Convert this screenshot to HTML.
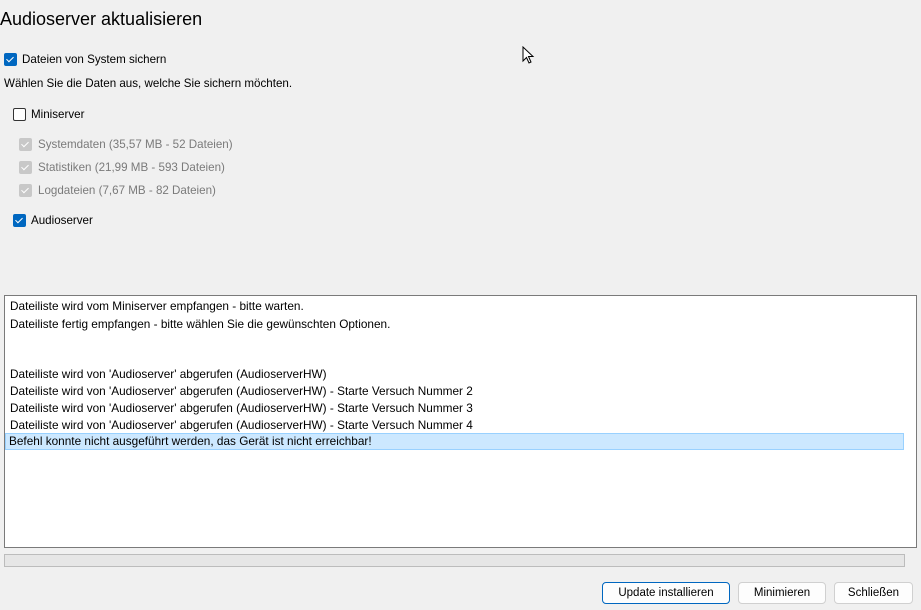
<!DOCTYPE html>
<html><head><meta charset="utf-8"><style>
body{margin:0;width:921px;height:610px;background:#f0f0f0;font-family:"Liberation Sans",sans-serif;font-size:11.6px;color:#000;position:relative;overflow:hidden}
.a{position:absolute;white-space:nowrap}
.cb{position:absolute;width:11px;height:11px;border-radius:2px;background:#0067c0;border:1px solid #0067c0}
.cb::after{content:"";position:absolute;left:3px;top:1px;width:3px;height:6px;border:solid #fff;border-width:0 1.3px 1.3px 0;transform:rotate(45deg)}
.cb.g{background:#c8c8c8;border-color:#c8c8c8}
.cb.e{background:#fff;border-color:#333}.cb.e::after{display:none}
.gr{color:#7a7a7a}
.box{position:absolute;left:4px;top:295px;width:911px;height:251px;background:#fff;border:1px solid #7a7a7a}
.ln{position:absolute;left:5px;height:15px;line-height:15px;font-size:11.8px}
.btn{position:absolute;top:582px;height:20px;border:1px solid #d0d0d0;border-radius:4px;background:#fdfdfd;text-align:center;line-height:20px;font-size:11.5px}
</style></head><body>
<div class="a" style="left:0;top:9px;font-size:18px">Audioserver aktualisieren</div>
<div class="cb" style="left:4px;top:53px"></div><div class="a" style="left:22px;top:53px">Dateien von System sichern</div>
<div class="a" style="left:4px;top:77px">Wählen Sie die Daten aus, welche Sie sichern möchten.</div>
<div class="cb e" style="left:13px;top:108px"></div><div class="a" style="left:31px;top:108px">Miniserver</div>
<div class="cb g" style="left:19px;top:138px"></div><div class="a gr" style="left:38px;top:138px">Systemdaten (35,57 MB - 52 Dateien)</div>
<div class="cb g" style="left:19px;top:161px"></div><div class="a gr" style="left:38px;top:161px">Statistiken (21,99 MB - 593 Dateien)</div>
<div class="cb g" style="left:19px;top:184px"></div><div class="a gr" style="left:38px;top:184px">Logdateien (7,67 MB - 82 Dateien)</div>
<div class="cb" style="left:13px;top:214px"></div><div class="a" style="left:31px;top:214px">Audioserver</div>
<div class="box">
<div class="ln" style="top:3px">Dateiliste wird vom Miniserver empfangen - bitte warten.</div>
<div class="ln" style="top:21px">Dateiliste fertig empfangen - bitte wählen Sie die gewünschten Optionen.</div>
<div class="ln" style="top:71px">Dateiliste wird von 'Audioserver' abgerufen (AudioserverHW)</div>
<div class="ln" style="top:88px">Dateiliste wird von 'Audioserver' abgerufen (AudioserverHW) - Starte Versuch Nummer 2</div>
<div class="ln" style="top:105px">Dateiliste wird von 'Audioserver' abgerufen (AudioserverHW) - Starte Versuch Nummer 3</div>
<div class="ln" style="top:122px">Dateiliste wird von 'Audioserver' abgerufen (AudioserverHW) - Starte Versuch Nummer 4</div>
<div class="ln" style="top:137px;left:0px;width:894px;padding-left:3px;background:#cce8ff;border:1px solid #99d1ff">Befehl konnte nicht ausgeführt werden, das Gerät ist nicht erreichbar!</div>
</div>
<div class="a" style="left:4px;top:554px;width:899px;height:11px;background:#e6e6e6;border:1px solid #bcbcbc"></div>
<div class="btn" style="left:602px;width:126px;border-color:#0067c0">Update installieren</div>
<div class="btn" style="left:738px;width:86px">Minimieren</div>
<div class="btn" style="left:834px;width:77px">Schließen</div>
<svg class="a" style="left:522px;top:46px" width="14" height="20"><path d="M1 1 L1 15 L4.5 11.5 L7 17 L9 16 L6.5 10.5 L11 10.5 Z" fill="#fff" stroke="#000" stroke-width="1"/></svg>
</body></html>
